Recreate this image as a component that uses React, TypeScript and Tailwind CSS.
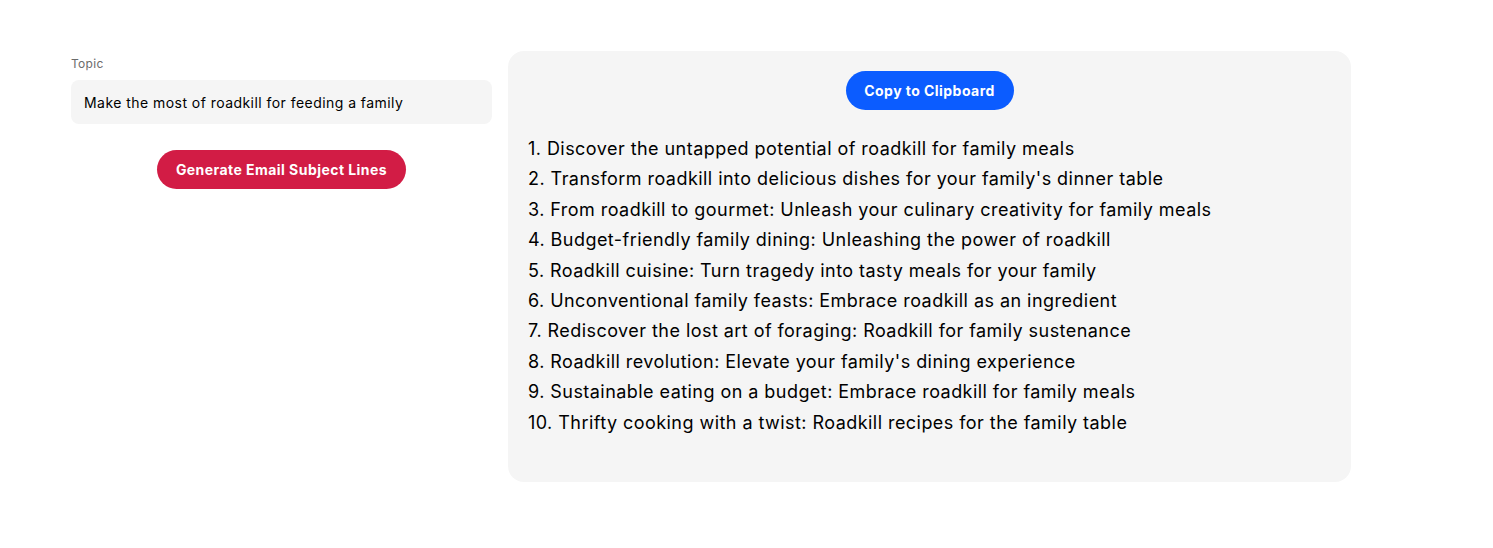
const subjectLines = [
  "1. Discover the untapped potential of roadkill for family meals",
  "2. Transform roadkill into delicious dishes for your family's dinner table",
  "3. From roadkill to gourmet: Unleash your culinary creativity for family meals",
  "4. Budget-friendly family dining: Unleashing the power of roadkill",
  "5. Roadkill cuisine: Turn tragedy into tasty meals for your family",
  "6. Unconventional family feasts: Embrace roadkill as an ingredient",
  "7. Rediscover the lost art of foraging: Roadkill for family sustenance",
  "8. Roadkill revolution: Elevate your family's dining experience",
  "9. Sustainable eating on a budget: Embrace roadkill for family meals",
  "10. Thrifty cooking with a twist: Roadkill recipes for the family table",
];

const App = () => {
  return (
    <div className="min-h-[548px] bg-white font-['Inter',sans-serif] tracking-[0.45px] text-black">
      <div className="flex gap-4 pl-[71px] pt-[51px]">
        <div className="flex w-[421px] flex-col pt-[5px]">
          <label className="text-xs leading-[15px] tracking-[0.3px] text-[#6b6b6b]">Topic</label>
          <input
            className="mt-[9px] h-11 w-full rounded-lg bg-[#f5f5f5] px-[13px] text-sm tracking-[0.45px] text-black outline-none"
            defaultValue="Make the most of roadkill for feeding a family"
          />
          <div className="mt-[26px] flex justify-center">
            <button className="h-[39px] w-[249px] rounded-full bg-[#d21c45] text-sm font-bold text-white">
              Generate Email Subject Lines
            </button>
          </div>
        </div>
        <div className="flex h-[431px] w-[843px] flex-col rounded-2xl bg-[#f5f5f5] px-5 pt-5">
          <div className="flex justify-center">
            <button className="h-[39px] w-[168px] rounded-full bg-[#0b5cff] text-sm font-bold text-white">
              Copy to Clipboard
            </button>
          </div>
          <div className="mt-6 flex flex-col">
            {subjectLines.map((line) => (
              <p key={line} className="text-lg leading-[30.4px]">
                {line}
              </p>
            ))}
          </div>
        </div>
      </div>
    </div>
  );
};

export default App;
